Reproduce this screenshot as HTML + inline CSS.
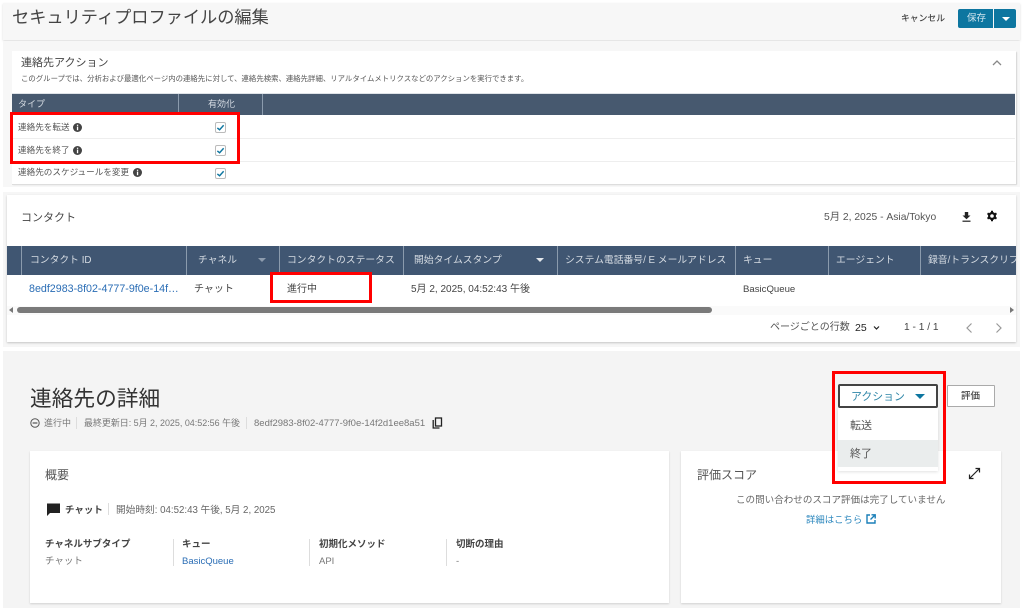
<!DOCTYPE html>
<html lang="ja"><head><meta charset="utf-8"><title>連絡先</title>
<style>
html,body{margin:0;padding:0;background:#fff}
body{width:1024px;height:608px;position:relative;overflow:hidden;font-family:"Liberation Sans","Noto Sans CJK JP",sans-serif;color:#444}
.a{position:absolute}
.t{position:absolute;white-space:nowrap;line-height:1;filter:blur(.35px)}
.red{position:absolute;border:3px solid #f00;box-sizing:border-box;z-index:5}
.dv{position:absolute;width:1px;background:#8b9bad}
.th{color:#d5dbe2;font-size:9.8px}
.cb{position:absolute;width:9px;height:9px;background:#fff;border:1px solid #bbb;border-radius:2px}
.cb svg{position:absolute;left:0;top:0}
.card{position:absolute;background:#fff;box-shadow:0 1px 2px rgba(0,0,0,.15)}
svg{position:absolute;display:block}
</style></head><body>
<div class="a" style="left:3px;top:3px;width:1017px;height:37px;background:#f7f7f7;box-shadow:0 1px 2px rgba(0,0,0,.15)"></div>
<div class="a" style="left:3px;top:41px;width:1017px;height:146px;background:#f7f7f7"></div>
<div class="t" style="left:12px;top:9px;font-size:17.2px;color:#444">セキュリティプロファイルの編集</div>
<div class="t" style="left:901px;top:14px;font-size:8.8px;color:#444;font-weight:500">キャンセル</div>
<div class="a" style="left:958px;top:9px;width:35px;height:19px;background:#0d76a0;border-radius:2px 0 0 2px"></div>
<div class="t" style="left:967px;top:14px;font-size:9.5px;color:#cfe4ee">保存</div>
<div class="a" style="left:994px;top:9px;width:22px;height:19px;background:#0d76a0;border-radius:0 2px 2px 0"></div>
<div class="a" style="left:1002px;top:17px;width:0;height:0;border:4px solid transparent;border-top:4px solid #fff;border-bottom:0"></div>

<!-- panel 1 -->
<div class="a" style="left:12px;top:51px;width:1004px;height:133px;background:#fff;box-shadow:1px 1px 1px rgba(0,0,0,.15)"></div>
<div class="t" style="left:21px;top:58px;font-size:11px;color:#444">連絡先アクション</div>
<div class="t" style="left:21px;top:75px;font-size:7.4px;color:#555">このグループでは、分析および最適化ページ内の連絡先に対して、連絡先検索、連絡先詳細、リアルタイムメトリクスなどのアクションを実行できます。</div>
<svg style="left:991px;top:58px" width="12" height="10" viewBox="0 0 12 10"><path d="M2 7 L6 3 L10 7" fill="none" stroke="#888" stroke-width="1.3"/></svg>
<div class="a" style="left:12px;top:93px;width:1003px;height:1px;background:#dfe3e8"></div>
<div class="a" style="left:12px;top:94px;width:1003px;height:21px;background:#47596f"></div>
<div class="dv" style="left:178px;top:94px;height:21px"></div>
<div class="dv" style="left:262px;top:94px;height:21px"></div>
<div class="t th" style="left:18px;top:100px;font-size:9px">タイプ</div>
<div class="t th" style="left:208px;top:100px;font-size:9px">有効化</div>
<div class="a" style="left:12px;top:138px;width:1003px;height:1px;background:#eee"></div>
<div class="a" style="left:12px;top:161px;width:1003px;height:1px;background:#eee"></div>
<div class="a" style="left:12px;top:184px;width:1004px;height:1px;background:#ddd"></div>
<div class="t" style="left:18px;top:123px;font-size:8.6px;color:#555">連絡先を転送</div>
<div class="t" style="left:18px;top:146px;font-size:8.6px;color:#555">連絡先を終了</div>
<div class="t" style="left:18px;top:168px;font-size:8.6px;color:#555">連絡先のスケジュールを変更</div>
<svg style="left:73px;top:123px" width="9" height="9" viewBox="0 0 9 9"><circle cx="4.5" cy="4.5" r="4.5" fill="#444"/><rect x="3.9" y="3.6" width="1.3" height="3.6" fill="#fff"/><rect x="3.9" y="1.7" width="1.3" height="1.2" fill="#fff"/></svg>
<svg style="left:73px;top:146px" width="9" height="9" viewBox="0 0 9 9"><circle cx="4.5" cy="4.5" r="4.5" fill="#444"/><rect x="3.9" y="3.6" width="1.3" height="3.6" fill="#fff"/><rect x="3.9" y="1.7" width="1.3" height="1.2" fill="#fff"/></svg>
<svg style="left:133px;top:168px" width="9" height="9" viewBox="0 0 9 9"><circle cx="4.5" cy="4.5" r="4.5" fill="#444"/><rect x="3.9" y="3.6" width="1.3" height="3.6" fill="#fff"/><rect x="3.9" y="1.7" width="1.3" height="1.2" fill="#fff"/></svg>
<div class="cb" style="left:215px;top:122px"><svg width="9" height="9" viewBox="0 0 10 10"><path d="M1.5 5.5 L4 7.5 L8.5 2.5" fill="none" stroke="#0d76a0" stroke-width="1.6"/></svg></div>
<div class="cb" style="left:215px;top:145px"><svg width="9" height="9" viewBox="0 0 10 10"><path d="M1.5 5.5 L4 7.5 L8.5 2.5" fill="none" stroke="#0d76a0" stroke-width="1.6"/></svg></div>
<div class="cb" style="left:215px;top:168px"><svg width="9" height="9" viewBox="0 0 10 10"><path d="M1.5 5.5 L4 7.5 L8.5 2.5" fill="none" stroke="#0d76a0" stroke-width="1.6"/></svg></div>
<div class="red" style="left:10px;top:112px;width:230px;height:52px"></div>

<!-- panel 2 -->
<div class="a" style="left:3px;top:192px;width:1017px;height:155px;background:#f6f6f6"></div>
<div class="a" style="left:7px;top:195px;width:1009px;height:147px;background:#fff;box-shadow:0 1px 2px rgba(0,0,0,.2)"></div>
<div class="t" style="left:21px;top:213px;font-size:11px;color:#444">コンタクト</div>
<div class="t" style="left:824px;top:213px;font-size:10.3px;color:#555">5月 2, 2025 - Asia/Tokyo</div>
<svg style="left:961px;top:211px" width="11" height="12" viewBox="0 0 11 12"><path d="M3.8 1 H7.2 V4.5 H9.5 L5.5 8.2 L1.5 4.5 H3.8 Z" fill="#222"/><rect x="1.5" y="9.6" width="8" height="1.2" fill="#222"/></svg>
<svg style="left:986px;top:210px" width="12" height="12" viewBox="0 0 12 12"><circle cx="6" cy="6" r="2.9" fill="none" stroke="#111" stroke-width="2.2"/><path d="M6 .8V2.6M6 9.4V11.2M1.5 3.4L3 4.3M9 7.7L10.5 8.6M1.5 8.6L3 7.7M9 4.3L10.5 3.4" stroke="#111" stroke-width="2"/></svg>
<div class="a" style="left:7px;top:246px;width:1009px;height:29px;background:#405672"></div>
<div class="dv" style="left:21px;top:246px;height:29px"></div>
<div class="dv" style="left:186px;top:246px;height:29px"></div>
<div class="dv" style="left:279px;top:246px;height:29px"></div>
<div class="dv" style="left:403px;top:246px;height:29px"></div>
<div class="dv" style="left:557px;top:246px;height:29px"></div>
<div class="dv" style="left:735px;top:246px;height:29px"></div>
<div class="dv" style="left:828px;top:246px;height:29px"></div>
<div class="dv" style="left:920px;top:246px;height:29px"></div>
<div class="t th" style="left:30px;top:256px">コンタクト ID</div>
<div class="t th" style="left:198px;top:256px">チャネル</div>
<div class="a" style="left:258px;top:258px;border:4px solid transparent;border-top:4px solid #8d9cae;border-bottom:0"></div>
<div class="t th" style="left:287px;top:256px">コンタクトのステータス</div>
<div class="t th" style="left:414px;top:256px">開始タイムスタンプ</div>
<div class="a" style="left:536px;top:258px;border:4px solid transparent;border-top:4px solid #e4e8ec;border-bottom:0"></div>
<div class="t th" style="left:565px;top:256px">システム電話番号/ E メールアドレス</div>
<div class="t th" style="left:743px;top:256px">キュー</div>
<div class="t th" style="left:836px;top:256px">エージェント</div>
<div class="a" style="left:921px;top:246px;width:95px;height:29px;overflow:hidden"><div class="t th" style="left:7px;top:10px">録音/トランスクリプト</div></div>
<div class="t" style="left:29px;top:284px;font-size:10.7px;color:#2a6db5">8edf2983-8f02-4777-9f0e-14f…</div>
<div class="t" style="left:194px;top:285px;font-size:10px;color:#444">チャット</div>
<div class="t" style="left:287px;top:285px;font-size:10px;color:#444">進行中</div>
<div class="t" style="left:411px;top:285px;font-size:10px;color:#444">5月 2, 2025, 04:52:43 午後</div>
<div class="t" style="left:743px;top:285px;font-size:9.6px;color:#444">BasicQueue</div>
<div class="a" style="left:7px;top:306px;width:1009px;height:9px;background:#fafafa"></div>
<div class="a" style="left:17px;top:307px;width:695px;height:6px;background:#7a7a7a;border-radius:3px"></div>
<div class="a" style="left:9px;top:307px;border:3px solid transparent;border-right:4px solid #777;border-left:0"></div>
<div class="a" style="left:1010px;top:307px;border:3px solid transparent;border-left:4px solid #777;border-right:0"></div>
<div class="t" style="left:770px;top:323px;font-size:10px;color:#555">ページごとの行数</div>
<div class="t" style="left:855px;top:323px;font-size:10.5px;color:#222">25</div>
<svg style="left:872px;top:324px" width="9" height="8" viewBox="0 0 9 8"><path d="M2 2.5 L4.5 5 L7 2.5" fill="none" stroke="#222" stroke-width="1.2"/></svg>
<div class="t" style="left:904px;top:323px;font-size:10.2px;color:#444">1 - 1 / 1</div>
<svg style="left:964px;top:322px" width="10" height="12" viewBox="0 0 10 12"><path d="M7.5 1.5 L3 6 L7.5 10.5" fill="none" stroke="#999" stroke-width="1.2"/></svg>
<svg style="left:994px;top:322px" width="10" height="12" viewBox="0 0 10 12"><path d="M2.5 1.5 L7 6 L2.5 10.5" fill="none" stroke="#999" stroke-width="1.2"/></svg>
<div class="red" style="left:270px;top:272px;width:102px;height:31px"></div>

<!-- details -->
<div class="a" style="left:3px;top:351px;width:1017px;height:257px;background:#f4f4f4"></div>
<div class="t" style="left:30px;top:388px;font-size:21.7px;color:#333">連絡先の詳細</div>
<svg style="left:30px;top:418px" width="10" height="10" viewBox="0 0 10 10"><circle cx="5" cy="5" r="4.2" fill="none" stroke="#555" stroke-width="1"/><rect x="2.6" y="4.4" width="4.8" height="1.2" fill="#555"/></svg>
<div class="t" style="left:44px;top:419px;font-size:9px;color:#777">進行中</div>
<div class="a" style="left:76px;top:417px;width:1px;height:12px;background:#ddd"></div>
<div class="t" style="left:84px;top:419px;font-size:8.95px;color:#777">最終更新日: 5月 2, 2025, 04:52:56 午後</div>
<div class="a" style="left:246px;top:417px;width:1px;height:12px;background:#ddd"></div>
<div class="t" style="left:254px;top:419px;font-size:9.5px;color:#777">8edf2983-8f02-4777-9f0e-14f2d1ee8a51</div>
<svg style="left:432px;top:417px" width="11" height="12" viewBox="0 0 11 12"><rect x="3.5" y="1" width="6" height="8" fill="none" stroke="#222" stroke-width="1.3"/><path d="M1.2 3 V11 H7.5" fill="none" stroke="#222" stroke-width="1.3"/></svg>

<div class="card" style="left:30px;top:451px;width:639px;height:152px"></div>
<div class="card" style="left:681px;top:451px;width:320px;height:152px"></div>
<div class="t" style="left:45px;top:469px;font-size:12px;color:#555">概要</div>
<svg style="left:46px;top:502px" width="15" height="15" viewBox="0 0 15 15"><path d="M1 1.5 H14 V11 H4 L1 14 Z" fill="#222"/></svg>
<div class="t" style="left:65px;top:506px;font-size:9.5px;font-weight:bold;color:#444">チャット</div>
<div class="a" style="left:108px;top:503px;width:1px;height:12px;background:#ddd"></div>
<div class="t" style="left:116px;top:506px;font-size:9.7px;color:#666">開始時刻: 04:52:43 午後, 5月 2, 2025</div>
<div class="t" style="left:45px;top:540px;font-size:9.5px;font-weight:bold;color:#444">チャネルサブタイプ</div>
<div class="t" style="left:45px;top:557px;font-size:9.5px;color:#777">チャット</div>
<div class="a" style="left:173px;top:539px;width:1px;height:27px;background:#ddd"></div>
<div class="t" style="left:182px;top:540px;font-size:9.5px;font-weight:bold;color:#444">キュー</div>
<div class="t" style="left:182px;top:557px;font-size:9.5px;color:#2a6db5">BasicQueue</div>
<div class="a" style="left:309px;top:539px;width:1px;height:27px;background:#ddd"></div>
<div class="t" style="left:319px;top:540px;font-size:9.5px;font-weight:bold;color:#444">初期化メソッド</div>
<div class="t" style="left:319px;top:557px;font-size:9.5px;color:#777">API</div>
<div class="a" style="left:446px;top:539px;width:1px;height:27px;background:#ddd"></div>
<div class="t" style="left:456px;top:540px;font-size:9.5px;font-weight:bold;color:#444">切断の理由</div>
<div class="t" style="left:456px;top:557px;font-size:9.5px;color:#777">-</div>

<div class="t" style="left:697px;top:469px;font-size:12px;color:#555">評価スコア</div>
<svg style="left:968px;top:467px" width="13" height="13" viewBox="0 0 13 13"><path d="M2 11 L11 2M7.5 1.5 H11.5 V5.5M1.5 7.5 V11.5 H5.5" fill="none" stroke="#222" stroke-width="1.2"/></svg>
<div class="t" style="left:736px;top:496px;font-size:9.55px;color:#666">この問い合わせのスコア評価は完了していません</div>
<div class="t" style="left:806px;top:515px;font-size:9.4px;color:#2a86bd">詳細はこちら</div>
<svg style="left:866px;top:514px" width="10" height="10" viewBox="0 0 10 10"><path d="M4 1 H1 V9 H9 V6" fill="none" stroke="#1a7fb8" stroke-width="1.4"/><path d="M5.5 .8 H9.2 V4.5 M9 1 L4.5 5.5" fill="none" stroke="#1a7fb8" stroke-width="1.4"/></svg>

<!-- action -->
<div class="a" style="left:838px;top:384px;width:100px;height:24px;box-sizing:border-box;background:#fff;border:2px solid #444;border-radius:2px"></div>
<div class="t" style="left:851px;top:392px;font-size:10.9px;color:#2f86a8">アクション</div>
<div class="a" style="left:915px;top:394px;border:5px solid transparent;border-top:5px solid #0d76a0;border-bottom:0"></div>
<div class="a" style="left:947px;top:385px;width:48px;height:22px;box-sizing:border-box;background:#fff;border:1px solid #aaa;border-radius:1px"></div>
<div class="t" style="left:961px;top:392px;font-size:9.5px;font-weight:500;color:#444">評価</div>
<div class="a" style="left:838px;top:408px;width:100px;height:63px;background:#fff;box-shadow:0 1px 3px rgba(0,0,0,.12);z-index:2"></div>
<div class="a" style="left:838px;top:440px;width:100px;height:27px;background:#eaeded;z-index:2"></div>
<div class="t" style="left:850px;top:421px;font-size:11px;color:#555;z-index:3">転送</div>
<div class="t" style="left:850px;top:449px;font-size:11px;color:#555;z-index:3">終了</div>
<div class="red" style="left:832px;top:371px;width:114px;height:113px"></div>
</body></html>
